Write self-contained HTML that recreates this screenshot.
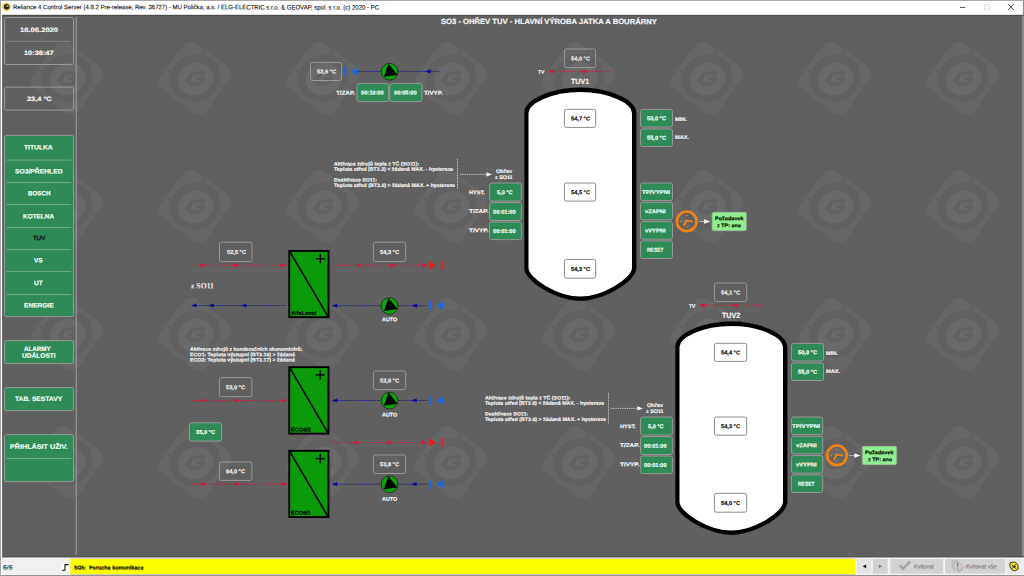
<!DOCTYPE html>
<html lang="cs"><head><meta charset="utf-8"><title>Reliance 4 Control Server</title>
<style>
html,body{margin:0;padding:0;}
body{width:1024px;height:576px;overflow:hidden;background:#606060;position:relative;font-family:"Liberation Sans",sans-serif;}
#g{position:absolute;left:0;top:0;width:1024px;height:576px;display:block;}
#t{position:absolute;left:0;top:0;width:1024px;height:576px;overflow:hidden;}
#t span{position:absolute;white-space:nowrap;transform-origin:0 50%;font-weight:bold;line-height:10px;height:10px;-webkit-text-stroke:0.18px currentColor;}
#t span.r{font-weight:normal;-webkit-text-stroke:0.08px currentColor;}
#t span.s{font-family:"Liberation Serif",serif;-webkit-text-stroke:0;}
</style></head><body>
<svg id="g" width="1024" height="576" viewBox="0 0 1024 576">
<defs><g id="wm">
<rect x="-29" y="-29" width="58" height="58" rx="11" transform="rotate(37)" fill="#676767"/>
<ellipse cx="0" cy="0" rx="26" ry="23.5" transform="rotate(-28)" fill="#616161"/>
<path d="M5.5 -20 L11.8 -33.5 M21 5 L34.5 12.8 M-6 21 L-11.8 34 M-21 -4.5 L-34 -11" fill="none" stroke="#616161" stroke-width="1.7"/>
<ellipse cx="0.3" cy="1.2" rx="18.2" ry="16" transform="rotate(-20)" fill="#6a6a6a"/>
<text transform="translate(0.6 0.3) rotate(-10) translate(0 6.8) scale(1.42 1)" stroke="#626262" stroke-width="0.6" x="0" y="0" text-anchor="middle" font-family="Liberation Sans, sans-serif" font-weight="bold" font-style="italic" font-size="18.8" fill="#626262">G</text>
</g></defs>
<use href="#wm" x="67" y="78"/>
<use href="#wm" x="195" y="78"/>
<use href="#wm" x="323" y="78"/>
<use href="#wm" x="451" y="78"/>
<use href="#wm" x="579" y="78"/>
<use href="#wm" x="707" y="78"/>
<use href="#wm" x="835" y="78"/>
<use href="#wm" x="963" y="78"/>
<use href="#wm" x="67" y="206"/>
<use href="#wm" x="195" y="206"/>
<use href="#wm" x="323" y="206"/>
<use href="#wm" x="451" y="206"/>
<use href="#wm" x="579" y="206"/>
<use href="#wm" x="707" y="206"/>
<use href="#wm" x="835" y="206"/>
<use href="#wm" x="963" y="206"/>
<use href="#wm" x="67" y="334"/>
<use href="#wm" x="195" y="334"/>
<use href="#wm" x="323" y="334"/>
<use href="#wm" x="451" y="334"/>
<use href="#wm" x="579" y="334"/>
<use href="#wm" x="707" y="334"/>
<use href="#wm" x="835" y="334"/>
<use href="#wm" x="963" y="334"/>
<use href="#wm" x="67" y="462"/>
<use href="#wm" x="195" y="462"/>
<use href="#wm" x="323" y="462"/>
<use href="#wm" x="451" y="462"/>
<use href="#wm" x="579" y="462"/>
<use href="#wm" x="707" y="462"/>
<use href="#wm" x="835" y="462"/>
<use href="#wm" x="963" y="462"/>
<rect x="0" y="0" width="1024" height="14.9" fill="#ffffff"/>
<rect x="0" y="0" width="1024" height="0.9" fill="#a0a0a0"/>
<rect x="0" y="14.9" width="1024" height="0.9" fill="#464646"/>
<rect x="1" y="0.9" width="1.1" height="575" fill="#ffffff"/>
<rect x="0" y="0" width="1" height="576" fill="#a6a6a6"/>
<rect x="1021.8" y="15.8" width="2.2" height="541" fill="#8a8a8a"/>
<rect x="1022.9" y="0" width="1.1" height="15" fill="#909090"/>
<ellipse cx="6.5" cy="6.9" rx="4.2" ry="3.9" transform="rotate(35 6.5 6.9)" fill="#f0cc12"/>
<circle cx="6.7" cy="6.7" r="2.7" fill="#141e4a"/>
<path d="M5.6 6.4 Q6.8 4.6 8.8 5.4 L8.6 6.6 L7 6.8 Z" fill="#f4d418"/>
<line x1="960.00" y1="7.40" x2="965.20" y2="7.40" stroke="#222" stroke-width="0.80" />
<rect x="984.30" y="4.30" width="4.90" height="5.40" rx="0.00" fill="none" stroke="#d2d2d2" stroke-width="0.70" />
<line x1="1008.20" y1="4.10" x2="1013.80" y2="9.90" stroke="#222" stroke-width="0.75" />
<line x1="1013.80" y1="4.10" x2="1008.20" y2="9.90" stroke="#222" stroke-width="0.75" />
<rect x="2.1" y="556.4" width="1022" height="1.1" fill="#4c4c4c"/>
<rect x="2.1" y="557.5" width="1022" height="17.6" fill="#fbfbfb"/>
<rect x="2.1" y="558.4" width="1022" height="16.3" fill="#f0f0f0"/>
<rect x="0" y="575.1" width="1024" height="0.9" fill="#989898"/>
<rect x="70.4" y="558.6" width="784.8" height="15.9" fill="#ffff00"/>
<rect x="70.4" y="558.3" width="784.8" height="0.6" fill="#c8c8e8"/>
<rect x="70.4" y="574.1" width="784.8" height="0.6" fill="#b0b0d8"/>
<rect x="61" y="563.2" width="8.4" height="8" fill="#fff"/>
<path d="M62 570.2 H65 V564.6 H68.6" fill="none" stroke="#111" stroke-width="1.1"/>
<rect x="857.1" y="558.9" width="14.1" height="14.8" fill="#e4e4e4"/>
<rect x="872.9" y="558.9" width="14.8" height="14.8" fill="#d2d2d2"/>
<rect x="890.4" y="558.9" width="52.7" height="14.8" fill="#d2d2d2"/>
<rect x="945.2" y="558.9" width="59.8" height="14.8" fill="#d2d2d2"/>
<rect x="1006.3" y="558.9" width="14.5" height="14.8" fill="#e8e8e8"/>
<path d="M862.60 566.30L866.20 564.40L866.20 568.20Z" fill="#111"/>
<path d="M882.40 566.30L878.80 564.40L878.80 568.20Z" fill="#8a8a8a"/>
<path d="M899.8 565.4 L903 568.8 L910.2 561.4" fill="none" stroke="#a6a6a6" stroke-width="2.4" stroke-linejoin="miter"/>
<path d="M952 560.4 H957.6 L959.6 562.4 V568 H952 Z" fill="#c4c4c4" stroke="#aaa" stroke-width="0.5"/>
<path d="M954 562.6 H960 L962 564.6 V570.4 H954 Z" fill="#cdcdcd" stroke="#a6a6a6" stroke-width="0.5"/>
<path d="M957.2 569 L959.6 571.6 L964.2 566.6" fill="none" stroke="#b0b0b0" stroke-width="1.2"/>
<path d="M957.6 563 V566.6 M957.6 567.6 V568.6" fill="none" stroke="#858585" stroke-width="1.5"/>
<path d="M1010.2 562.4 L1015 562 L1017.8 564.4 L1018.2 569.2 L1014.6 571 L1011.6 569.6 L1009.8 566 Z" fill="#f2e22a" stroke="#1c1c1c" stroke-width="0.8"/>
<path d="M1011.6 564.6 L1016.4 569 M1016 564 L1012.2 568.6 M1012.4 566.6 H1016" stroke="#1c1c1c" stroke-width="0.8" fill="none"/>
<line x1="76.20" y1="17.00" x2="76.20" y2="555.00" stroke="#a0a0a0" stroke-width="1.00" />
<rect x="4.50" y="17.50" width="69.00" height="47.00" rx="1.80" fill="none" stroke="#979797" stroke-width="1.00" />
<line x1="6.20" y1="41.30" x2="71.20" y2="41.30" stroke="#8a8a8a" stroke-width="0.80" />
<rect x="4.50" y="87.10" width="69.00" height="23.00" rx="1.80" fill="none" stroke="#979797" stroke-width="1.00" />
<rect x="4.50" y="135.40" width="69.00" height="181.20" rx="1.80" fill="#2e8b57" stroke="#979797" stroke-width="1.00" />
<line x1="6.40" y1="160.10" x2="71.20" y2="160.10" stroke="#8fb8a0" stroke-width="0.70" />
<line x1="6.40" y1="182.60" x2="71.20" y2="182.60" stroke="#8fb8a0" stroke-width="0.70" />
<line x1="6.40" y1="204.60" x2="71.20" y2="204.60" stroke="#8fb8a0" stroke-width="0.70" />
<line x1="6.40" y1="227.60" x2="71.20" y2="227.60" stroke="#8fb8a0" stroke-width="0.70" />
<line x1="6.40" y1="249.60" x2="71.20" y2="249.60" stroke="#8fb8a0" stroke-width="0.70" />
<line x1="6.40" y1="271.60" x2="71.20" y2="271.60" stroke="#8fb8a0" stroke-width="0.70" />
<line x1="6.40" y1="294.60" x2="71.20" y2="294.60" stroke="#8fb8a0" stroke-width="0.70" />
<rect x="4.50" y="340.60" width="69.00" height="23.00" rx="1.80" fill="#2e8b57" stroke="#979797" stroke-width="1.00" />
<rect x="4.50" y="387.60" width="69.00" height="23.00" rx="1.80" fill="#2e8b57" stroke="#979797" stroke-width="1.00" />
<rect x="4.50" y="434.60" width="69.00" height="47.00" rx="1.80" fill="#2e8b57" stroke="#979797" stroke-width="1.00" />
<line x1="6.40" y1="458.50" x2="71.20" y2="458.50" stroke="#8fb8a0" stroke-width="0.70" />
<rect x="310.50" y="62.40" width="31.20" height="18.10" rx="2.00" fill="none" stroke="#979797" stroke-width="1.00" />
<line x1="344.50" y1="66.90" x2="344.50" y2="75.90" stroke="#1469f0" stroke-width="1.40" />
<path d="M351.40 71.40L357.20 67.40L357.20 75.40Z" fill="#1469f0"/>
<line x1="357.20" y1="71.40" x2="440.60" y2="71.40" stroke="#0c0c96" stroke-width="0.80" stroke-dasharray="1.1 0.75" />
<path d="M425.00 71.40L430.60 69.30L430.60 73.50Z" fill="#0c0c96"/>
<circle cx="389.55" cy="71.70" r="8.40" fill="#0ca20c" stroke="#1a1a1a" stroke-width="0.7"/>
<path d="M388.55 63.70 L383.95 76.80 L397.55 74.90 Z" fill="#000"/>
<rect x="357.00" y="83.40" width="31.60" height="18.20" rx="2.00" fill="#2e8b57" stroke="#979797" stroke-width="1.00" />
<rect x="389.80" y="83.40" width="32.10" height="18.20" rx="2.00" fill="#2e8b57" stroke="#979797" stroke-width="1.00" />
<rect x="219.50" y="242.20" width="32.50" height="19.40" rx="2.00" fill="none" stroke="#979797" stroke-width="1.00" />
<line x1="191.00" y1="265.30" x2="286.60" y2="265.30" stroke="#dc143c" stroke-width="0.80" stroke-dasharray="1.1 0.75" />
<path d="M206.40 265.30L200.80 263.20L200.80 267.40Z" fill="#dc143c"/>
<path d="M239.60 265.30L234.00 263.20L234.00 267.40Z" fill="#dc143c"/>
<path d="M286.40 265.30L280.80 263.20L280.80 267.40Z" fill="#dc143c"/>
<rect x="289.25" y="250.95" width="39.30" height="66.20" fill="#0a9a0a" stroke="#000" stroke-width="1.9"/>
<line x1="289.70" y1="251.40" x2="328.10" y2="316.70" stroke="#000" stroke-width="1.60" />
<line x1="315.70" y1="258.70" x2="324.90" y2="258.70" stroke="#000" stroke-width="1.40" />
<line x1="320.30" y1="254.10" x2="320.30" y2="263.30" stroke="#000" stroke-width="1.40" />
<rect x="373.40" y="242.20" width="32.30" height="19.40" rx="2.00" fill="none" stroke="#979797" stroke-width="1.00" />
<line x1="331.00" y1="265.30" x2="427.60" y2="265.30" stroke="#dc143c" stroke-width="0.80" stroke-dasharray="1.1 0.75" />
<path d="M362.60 265.30L357.00 263.20L357.00 267.40Z" fill="#dc143c"/>
<path d="M395.80 265.30L390.20 263.20L390.20 267.40Z" fill="#dc143c"/>
<path d="M428.00 265.30L422.40 263.20L422.40 267.40Z" fill="#dc143c"/>
<path d="M435.60 265.30L429.60 261.30L429.60 269.30Z" fill="#ff1010"/>
<line x1="442.20" y1="261.00" x2="442.20" y2="269.60" stroke="#ff1010" stroke-width="1.30" />
<line x1="192.00" y1="305.50" x2="285.60" y2="305.50" stroke="#0c0c96" stroke-width="0.80" stroke-dasharray="1.1 0.75" />
<path d="M191.00 305.50L196.60 303.40L196.60 307.60Z" fill="#0c0c96"/>
<path d="M208.20 305.50L213.80 303.40L213.80 307.60Z" fill="#0c0c96"/>
<path d="M241.00 305.50L246.60 303.40L246.60 307.60Z" fill="#0c0c96"/>
<line x1="332.50" y1="305.70" x2="427.40" y2="305.70" stroke="#0c0c96" stroke-width="0.80" stroke-dasharray="1.1 0.75" />
<path d="M331.80 305.70L337.40 303.60L337.40 307.80Z" fill="#0c0c96"/>
<path d="M411.40 305.70L417.00 303.60L417.00 307.80Z" fill="#0c0c96"/>
<circle cx="389.50" cy="305.90" r="8.40" fill="#0ca20c" stroke="#1a1a1a" stroke-width="0.7"/>
<path d="M388.50 297.90 L383.90 311.00 L397.50 309.10 Z" fill="#000"/>
<line x1="430.30" y1="301.00" x2="430.30" y2="310.20" stroke="#1469f0" stroke-width="1.40" />
<path d="M436.90 305.70L442.90 301.60L442.90 309.80Z" fill="#1469f0"/>
<rect x="219.40" y="377.60" width="32.50" height="19.10" rx="2.00" fill="none" stroke="#979797" stroke-width="1.00" />
<line x1="190.40" y1="400.50" x2="287.00" y2="400.50" stroke="#dc143c" stroke-width="0.80" stroke-dasharray="1.1 0.75" />
<path d="M207.00 400.50L201.40 398.40L201.40 402.60Z" fill="#dc143c"/>
<path d="M240.40 400.50L234.80 398.40L234.80 402.60Z" fill="#dc143c"/>
<path d="M287.00 400.50L281.40 398.40L281.40 402.60Z" fill="#dc143c"/>
<rect x="289.25" y="367.15" width="39.20" height="66.50" fill="#0a9a0a" stroke="#000" stroke-width="1.9"/>
<line x1="289.70" y1="367.60" x2="328.00" y2="433.20" stroke="#000" stroke-width="1.60" />
<line x1="315.60" y1="374.90" x2="324.80" y2="374.90" stroke="#000" stroke-width="1.40" />
<line x1="320.20" y1="370.30" x2="320.20" y2="379.50" stroke="#000" stroke-width="1.40" />
<rect x="373.40" y="371.00" width="32.30" height="18.70" rx="2.00" fill="none" stroke="#979797" stroke-width="1.00" />
<line x1="332.50" y1="400.50" x2="428.20" y2="400.50" stroke="#0c0c96" stroke-width="0.80" stroke-dasharray="1.1 0.75" />
<path d="M331.80 400.50L337.40 398.40L337.40 402.60Z" fill="#0c0c96"/>
<path d="M411.00 400.50L416.60 398.40L416.60 402.60Z" fill="#0c0c96"/>
<circle cx="389.55" cy="400.55" r="8.40" fill="#0ca20c" stroke="#1a1a1a" stroke-width="0.7"/>
<path d="M388.55 392.55 L383.95 405.65 L397.55 403.75 Z" fill="#000"/>
<line x1="430.20" y1="396.00" x2="430.20" y2="405.20" stroke="#1469f0" stroke-width="1.40" />
<path d="M436.90 400.50L442.90 396.40L442.90 404.60Z" fill="#1469f0"/>
<rect x="189.50" y="422.80" width="32.20" height="18.30" rx="2.00" fill="#2e8b57" stroke="#979797" stroke-width="1.00" />
<line x1="331.80" y1="442.50" x2="426.60" y2="442.50" stroke="#dc143c" stroke-width="0.80" stroke-dasharray="1.1 0.75" />
<path d="M360.20 442.50L354.60 440.40L354.60 444.60Z" fill="#dc143c"/>
<path d="M393.20 442.50L387.60 440.40L387.60 444.60Z" fill="#dc143c"/>
<path d="M427.40 442.50L421.80 440.40L421.80 444.60Z" fill="#dc143c"/>
<path d="M435.90 442.50L429.90 438.50L429.90 446.50Z" fill="#ff1010"/>
<line x1="442.20" y1="438.20" x2="442.20" y2="446.90" stroke="#ff1010" stroke-width="1.30" />
<rect x="219.40" y="462.00" width="32.50" height="18.40" rx="2.00" fill="none" stroke="#979797" stroke-width="1.00" />
<line x1="190.40" y1="484.20" x2="287.00" y2="484.20" stroke="#dc143c" stroke-width="0.80" stroke-dasharray="1.1 0.75" />
<path d="M207.00 484.20L201.40 482.10L201.40 486.30Z" fill="#dc143c"/>
<path d="M240.40 484.20L234.80 482.10L234.80 486.30Z" fill="#dc143c"/>
<path d="M287.00 484.20L281.40 482.10L281.40 486.30Z" fill="#dc143c"/>
<rect x="289.25" y="450.85" width="39.20" height="66.20" fill="#0a9a0a" stroke="#000" stroke-width="1.9"/>
<line x1="289.70" y1="451.30" x2="328.00" y2="516.60" stroke="#000" stroke-width="1.60" />
<line x1="315.60" y1="458.60" x2="324.80" y2="458.60" stroke="#000" stroke-width="1.40" />
<line x1="320.20" y1="454.00" x2="320.20" y2="463.20" stroke="#000" stroke-width="1.40" />
<rect x="373.40" y="455.00" width="32.30" height="18.50" rx="2.00" fill="none" stroke="#979797" stroke-width="1.00" />
<line x1="332.50" y1="484.20" x2="428.20" y2="484.20" stroke="#0c0c96" stroke-width="0.80" stroke-dasharray="1.1 0.75" />
<path d="M331.80 484.20L337.40 482.10L337.40 486.30Z" fill="#0c0c96"/>
<path d="M411.00 484.20L416.60 482.10L416.60 486.30Z" fill="#0c0c96"/>
<circle cx="389.50" cy="484.20" r="8.40" fill="#0ca20c" stroke="#1a1a1a" stroke-width="0.7"/>
<path d="M388.50 476.20 L383.90 489.30 L397.50 487.40 Z" fill="#000"/>
<line x1="430.20" y1="479.70" x2="430.20" y2="488.90" stroke="#1469f0" stroke-width="1.40" />
<path d="M436.90 484.20L442.90 480.10L442.90 488.30Z" fill="#1469f0"/>
<line x1="457.50" y1="158.90" x2="457.50" y2="189.80" stroke="#f0f0f0" stroke-width="0.80" stroke-dasharray="0.9 0.9" />
<line x1="460.00" y1="174.40" x2="487.00" y2="174.40" stroke="#f0f0f0" stroke-width="0.80" stroke-dasharray="0.9 0.9" />
<path d="M492.00 174.40L486.40 172.20L486.40 176.60Z" fill="#f8f8f8"/>
<rect x="489.60" y="183.00" width="31.80" height="18.10" rx="2.00" fill="#2e8b57" stroke="#979797" stroke-width="1.00" />
<rect x="489.60" y="202.60" width="31.80" height="17.90" rx="2.00" fill="#2e8b57" stroke="#979797" stroke-width="1.00" />
<rect x="489.60" y="222.00" width="31.80" height="17.60" rx="2.00" fill="#2e8b57" stroke="#979797" stroke-width="1.00" />
<rect x="564.40" y="49.00" width="31.30" height="18.60" rx="2.00" fill="none" stroke="#979797" stroke-width="1.00" />
<line x1="549.50" y1="71.40" x2="611.40" y2="71.40" stroke="#dc143c" stroke-width="0.80" stroke-dasharray="1.1 0.75" />
<path d="M548.20 71.40L553.80 69.30L553.80 73.50Z" fill="#dc143c"/>
<path d="M580.80 71.40L586.40 69.30L586.40 73.50Z" fill="#dc143c"/>
<clipPath id="tk0"><path d="M524.20 112.90 C524.20 99.50 551.05 87.60 580.25 87.60 C609.45 87.60 636.30 99.50 636.30 112.90 L636.30 267.80 C636.30 282.50 602.25 300.90 580.25 300.90 C558.25 300.90 524.20 282.50 524.20 267.80 Z"/></clipPath>
<path d="M524.20 112.90 C524.20 99.50 551.05 87.60 580.25 87.60 C609.45 87.60 636.30 99.50 636.30 112.90 L636.30 267.80 C636.30 282.50 602.25 300.90 580.25 300.90 C558.25 300.90 524.20 282.50 524.20 267.80 Z" fill="#000"/>
<path d="M524.20 112.90 C524.20 99.50 551.05 87.60 580.25 87.60 C609.45 87.60 636.30 99.50 636.30 112.90 L636.30 267.80 C636.30 282.50 602.25 300.90 580.25 300.90 C558.25 300.90 524.20 282.50 524.20 267.80 Z" fill="#fff" stroke="#000" stroke-width="8.6" clip-path="url(#tk0)"/>
<rect x="564.40" y="109.30" width="31.30" height="18.10" rx="2.00" fill="#ffffff" stroke="#8a8a8a" stroke-width="1.00" />
<rect x="564.40" y="183.00" width="31.30" height="18.10" rx="2.00" fill="#ffffff" stroke="#8a8a8a" stroke-width="1.00" />
<rect x="564.40" y="259.40" width="31.30" height="18.80" rx="2.00" fill="#ffffff" stroke="#8a8a8a" stroke-width="1.00" />
<rect x="640.50" y="109.40" width="32.00" height="17.60" rx="2.00" fill="#2e8b57" stroke="#979797" stroke-width="1.00" />
<rect x="640.50" y="128.90" width="32.00" height="17.60" rx="2.00" fill="#2e8b57" stroke="#979797" stroke-width="1.00" />
<rect x="640.50" y="183.00" width="32.00" height="17.60" rx="2.00" fill="#2e8b57" stroke="#979797" stroke-width="1.00" />
<rect x="640.50" y="202.30" width="32.00" height="17.60" rx="2.00" fill="#2e8b57" stroke="#979797" stroke-width="1.00" />
<rect x="640.50" y="221.60" width="32.00" height="17.60" rx="2.00" fill="#2e8b57" stroke="#979797" stroke-width="1.00" />
<rect x="640.50" y="240.90" width="32.00" height="17.60" rx="2.00" fill="#2e8b57" stroke="#979797" stroke-width="1.00" />
<circle cx="686.70" cy="221.30" r="9.8" fill="none" stroke="#f5820f" stroke-width="2.6"/>
<path d="M692.70 221.60 L686.30 220.50 L683.70 225.90" fill="none" stroke="#f5820f" stroke-width="1.8" stroke-linejoin="miter"/>
<circle cx="686.70" cy="215.50" r="0.75" fill="#f5820f"/>
<circle cx="686.70" cy="227.20" r="0.75" fill="#f5820f"/>
<circle cx="680.80" cy="221.40" r="0.75" fill="#f5820f"/>
<line x1="699.40" y1="221.50" x2="704.40" y2="221.50" stroke="#f0f0f0" stroke-width="0.90" stroke-dasharray="1 0.9" />
<path d="M710.30 221.50L704.10 219.20L704.10 223.80Z" fill="#f8f8f8"/>
<rect x="711.90" y="212.00" width="34.80" height="18.90" rx="1.80" fill="#90ee90" stroke="#8a808a" stroke-width="0.70" />
<line x1="608.50" y1="392.90" x2="608.50" y2="423.80" stroke="#f0f0f0" stroke-width="0.80" stroke-dasharray="0.9 0.9" />
<line x1="611.00" y1="408.40" x2="638.00" y2="408.40" stroke="#f0f0f0" stroke-width="0.80" stroke-dasharray="0.9 0.9" />
<path d="M643.00 408.40L637.40 406.20L637.40 410.60Z" fill="#f8f8f8"/>
<rect x="640.60" y="417.00" width="31.80" height="18.10" rx="2.00" fill="#2e8b57" stroke="#979797" stroke-width="1.00" />
<rect x="640.60" y="436.60" width="31.80" height="17.90" rx="2.00" fill="#2e8b57" stroke="#979797" stroke-width="1.00" />
<rect x="640.60" y="456.00" width="31.80" height="17.60" rx="2.00" fill="#2e8b57" stroke="#979797" stroke-width="1.00" />
<rect x="714.40" y="283.00" width="32.30" height="18.60" rx="2.00" fill="none" stroke="#979797" stroke-width="1.00" />
<line x1="700.50" y1="305.40" x2="762.40" y2="305.40" stroke="#dc143c" stroke-width="0.80" stroke-dasharray="1.1 0.75" />
<path d="M699.20 305.40L704.80 303.30L704.80 307.50Z" fill="#dc143c"/>
<path d="M731.80 305.40L737.40 303.30L737.40 307.50Z" fill="#dc143c"/>
<clipPath id="tk151"><path d="M675.20 346.90 C675.20 333.50 702.05 321.60 731.25 321.60 C760.45 321.60 787.30 333.50 787.30 346.90 L787.30 501.80 C787.30 516.50 753.25 534.90 731.25 534.90 C709.25 534.90 675.20 516.50 675.20 501.80 Z"/></clipPath>
<path d="M675.20 346.90 C675.20 333.50 702.05 321.60 731.25 321.60 C760.45 321.60 787.30 333.50 787.30 346.90 L787.30 501.80 C787.30 516.50 753.25 534.90 731.25 534.90 C709.25 534.90 675.20 516.50 675.20 501.80 Z" fill="#000"/>
<path d="M675.20 346.90 C675.20 333.50 702.05 321.60 731.25 321.60 C760.45 321.60 787.30 333.50 787.30 346.90 L787.30 501.80 C787.30 516.50 753.25 534.90 731.25 534.90 C709.25 534.90 675.20 516.50 675.20 501.80 Z" fill="#fff" stroke="#000" stroke-width="8.6" clip-path="url(#tk151)"/>
<rect x="714.40" y="343.30" width="32.30" height="18.10" rx="2.00" fill="#ffffff" stroke="#8a8a8a" stroke-width="1.00" />
<rect x="714.40" y="417.00" width="32.30" height="18.10" rx="2.00" fill="#ffffff" stroke="#8a8a8a" stroke-width="1.00" />
<rect x="714.40" y="493.40" width="32.30" height="18.80" rx="2.00" fill="#ffffff" stroke="#8a8a8a" stroke-width="1.00" />
<rect x="791.50" y="343.40" width="32.00" height="17.60" rx="2.00" fill="#2e8b57" stroke="#979797" stroke-width="1.00" />
<rect x="791.50" y="362.90" width="32.00" height="17.60" rx="2.00" fill="#2e8b57" stroke="#979797" stroke-width="1.00" />
<rect x="791.50" y="417.00" width="31.20" height="17.60" rx="2.00" fill="#2e8b57" stroke="#979797" stroke-width="1.00" />
<rect x="791.50" y="436.30" width="31.20" height="17.60" rx="2.00" fill="#2e8b57" stroke="#979797" stroke-width="1.00" />
<rect x="791.50" y="455.60" width="31.20" height="17.60" rx="2.00" fill="#2e8b57" stroke="#979797" stroke-width="1.00" />
<rect x="791.50" y="474.90" width="31.20" height="17.60" rx="2.00" fill="#2e8b57" stroke="#979797" stroke-width="1.00" />
<circle cx="836.90" cy="455.30" r="9.8" fill="none" stroke="#f5820f" stroke-width="2.6"/>
<path d="M842.90 455.60 L836.50 454.50 L833.90 459.90" fill="none" stroke="#f5820f" stroke-width="1.8" stroke-linejoin="miter"/>
<circle cx="836.90" cy="449.50" r="0.75" fill="#f5820f"/>
<circle cx="836.90" cy="461.20" r="0.75" fill="#f5820f"/>
<circle cx="831.00" cy="455.40" r="0.75" fill="#f5820f"/>
<line x1="849.60" y1="455.50" x2="854.60" y2="455.50" stroke="#f0f0f0" stroke-width="0.90" stroke-dasharray="1 0.9" />
<path d="M860.50 455.50L854.30 453.20L854.30 457.80Z" fill="#f8f8f8"/>
<rect x="862.10" y="446.00" width="34.80" height="18.90" rx="1.80" fill="#90ee90" stroke="#8a808a" stroke-width="0.70" />
</svg>
<div id="t">
<span id="t0" class="r" style="left:13.30px;top:2px;font-size:6.50px;color:#000;transform:translateY(0.20px) scaleX(0.9244) rotate(0.04deg);">Reliance 4 Control Server (4.8.2 Pre-release, Rev. 36727) - MU Polička, a.s. / ELG-ELECTRIC s.r.o. &amp; GEOVAP, spol. s r.o. (c) 2020 - PC</span>
<span id="t1" class="r" style="left:3.00px;top:562px;font-size:6.30px;color:#111;transform:translateY(0.40px) scaleX(1.0715) rotate(0.04deg);">6/6</span>
<span id="t2" style="left:73.60px;top:562px;font-size:5.50px;color:#000;transform:translateY(0.40px) scaleX(0.9494) rotate(0.04deg);">SO5:</span>
<span id="t3" style="left:89.00px;top:562px;font-size:5.50px;color:#000;transform:translateY(0.40px) scaleX(0.9831) rotate(0.04deg);">Porucha komunikace</span>
<span id="t4" class="r" style="left:913.80px;top:561px;font-size:6.00px;color:#707070;transform:translateY(0.60px) scaleX(0.9274) rotate(0.04deg);">Kvitovat</span>
<span id="t5" class="r" style="left:966.40px;top:561px;font-size:6.00px;color:#707070;transform:translateY(0.60px) scaleX(0.9454) rotate(0.04deg);">Kvitovat vše</span>
<span id="t6" style="left:20.00px;top:25px;font-size:6.30px;color:#f4f4f4;transform:translateY(0.00px) scaleX(1.2087) rotate(0.04deg);">16.06.2020</span>
<span id="t7" style="left:24.40px;top:48px;font-size:6.30px;color:#f4f4f4;transform:translateY(0.00px) scaleX(1.1734) rotate(0.04deg);">10:38:47</span>
<span id="t8" style="left:26.60px;top:93px;font-size:6.30px;color:#f4f4f4;transform:translateY(0.90px) scaleX(1.1714) rotate(0.04deg);">23,4 °C</span>
<span id="t9" style="left:24.40px;top:142px;font-size:6.50px;color:#f0fff4;transform:translateY(0.50px) scaleX(1.0317) rotate(0.04deg);">TITULKA</span>
<span id="t10" style="left:14.60px;top:166px;font-size:6.50px;color:#f0fff4;transform:translateY(0.50px) scaleX(1.0353) rotate(0.04deg);">SO3/PŘEHLED</span>
<span id="t11" style="left:27.80px;top:188px;font-size:6.50px;color:#f0fff4;transform:translateY(0.40px) scaleX(0.9578) rotate(0.04deg);">BOSCH</span>
<span id="t12" style="left:22.90px;top:211px;font-size:6.50px;color:#f0fff4;transform:translateY(0.40px) scaleX(0.9895) rotate(0.04deg);">KOTELNA</span>
<span id="t13" style="left:32.50px;top:233px;font-size:6.50px;color:#0c0c1c;transform:translateY(0.30px) scaleX(0.9610) rotate(0.04deg);">TUV</span>
<span id="t14" style="left:34.40px;top:255px;font-size:6.50px;color:#f0fff4;transform:translateY(0.60px) scaleX(1.0024) rotate(0.04deg);">VS</span>
<span id="t15" style="left:33.80px;top:278px;font-size:6.50px;color:#f0fff4;transform:translateY(0.20px) scaleX(1.0024) rotate(0.04deg);">UT</span>
<span id="t16" style="left:23.80px;top:300px;font-size:6.50px;color:#f0fff4;transform:translateY(0.40px) scaleX(1.0112) rotate(0.04deg);">ENERGIE</span>
<span id="t17" style="left:24.40px;top:344px;font-size:6.50px;color:#f0fff4;transform:translateY(0.00px) scaleX(0.9562) rotate(0.04deg);">ALARMY</span>
<span id="t18" style="left:21.90px;top:350px;font-size:6.50px;color:#f0fff4;transform:translateY(0.70px) scaleX(1.0138) rotate(0.04deg);">UDÁLOSTI</span>
<span id="t19" style="left:15.00px;top:394px;font-size:6.50px;color:#f0fff4;transform:translateY(0.00px) scaleX(1.0265) rotate(0.04deg);">TAB. SESTAVY</span>
<span id="t20" style="left:9.80px;top:441px;font-size:6.50px;color:#f0fff4;transform:translateY(0.70px) scaleX(1.1065) rotate(0.04deg);">PŘIHLÁSIT UŽIV.</span>
<span id="t21" style="left:440.50px;top:17px;font-size:7.60px;color:#f4f4f4;transform:translateY(0.00px) scaleX(1.0055) rotate(0.04deg);">SO3 - OHŘEV TUV - HLAVNÍ VÝROBA JATKA A BOURÁRNY</span>
<span id="t22" style="left:316.90px;top:66px;font-size:5.70px;color:#ececec;transform:translateY(0.55px) scaleX(0.9972) rotate(0.04deg);">52,6 °C</span>
<span id="t23" style="left:336.00px;top:87px;font-size:5.60px;color:#f4f4f4;transform:translateY(0.70px) scaleX(1.1172) rotate(0.04deg);">T/ZAP.</span>
<span id="t24" style="left:360.65px;top:87px;font-size:5.70px;color:#f2fff4;transform:translateY(0.60px) scaleX(0.9961) rotate(0.04deg);">00:10:00</span>
<span id="t25" style="left:393.70px;top:87px;font-size:5.70px;color:#f2fff4;transform:translateY(0.60px) scaleX(0.9961) rotate(0.04deg);">00:05:00</span>
<span id="t26" style="left:424.20px;top:87px;font-size:5.60px;color:#f4f4f4;transform:translateY(0.70px) scaleX(1.1054) rotate(0.04deg);">T/VYP.</span>
<span id="t27" style="left:226.55px;top:247px;font-size:5.70px;color:#ececec;transform:translateY(0.00px) scaleX(0.9972) rotate(0.04deg);">52,5 °C</span>
<span id="t28" style="left:291.20px;top:307px;font-size:5.70px;color:#000;transform:translateY(0.90px) scaleX(1.0038) rotate(0.04deg);">AlfaLaval</span>
<span id="t29" style="left:380.35px;top:247px;font-size:5.70px;color:#ececec;transform:translateY(0.00px) scaleX(0.9972) rotate(0.04deg);">54,3 °C</span>
<span id="t30" class="s" style="left:190.80px;top:281px;font-size:7.80px;color:#f0f0f0;transform:translateY(0.30px) scaleX(0.9916) rotate(0.04deg);">z SO11</span>
<span id="t31" style="left:381.90px;top:314px;font-size:5.30px;color:#f4f4f4;transform:translateY(0.30px) scaleX(1.0182) rotate(0.04deg);">AUTO</span>
<span id="t32" style="left:189.70px;top:343px;font-size:5.00px;color:#f2f2f2;transform:translateY(0.80px) scaleX(1.0301) rotate(0.04deg);">Aktivace zdrojů z kondezačních ekonomizérů:</span>
<span id="t33" style="left:189.70px;top:349px;font-size:5.00px;color:#f2f2f2;transform:translateY(0.20px) scaleX(1.0511) rotate(0.04deg);">ECO1: Teplota výstupní (BT3.16) &gt; žádaná</span>
<span id="t34" style="left:189.70px;top:354px;font-size:5.00px;color:#f2f2f2;transform:translateY(0.50px) scaleX(1.0511) rotate(0.04deg);">ECO2: Teplota výstupní (BT3.17) &gt; žádaná</span>
<span id="t35" style="left:226.45px;top:382px;font-size:5.70px;color:#ececec;transform:translateY(0.25px) scaleX(0.9972) rotate(0.04deg);">53,0 °C</span>
<span id="t36" style="left:291.20px;top:424px;font-size:5.70px;color:#000;transform:translateY(0.40px) scaleX(0.9881) rotate(0.04deg);">ECO6/2</span>
<span id="t37" style="left:380.35px;top:375px;font-size:5.70px;color:#ececec;transform:translateY(0.45px) scaleX(0.9972) rotate(0.04deg);">52,8 °C</span>
<span id="t38" style="left:381.90px;top:409px;font-size:5.30px;color:#f4f4f4;transform:translateY(0.60px) scaleX(1.0182) rotate(0.04deg);">AUTO</span>
<span id="t39" style="left:196.40px;top:427px;font-size:5.70px;color:#f2fff4;transform:translateY(0.05px) scaleX(0.9972) rotate(0.04deg);">35,0 °C</span>
<span id="t40" style="left:226.45px;top:466px;font-size:5.70px;color:#ececec;transform:translateY(0.30px) scaleX(0.9972) rotate(0.04deg);">64,0 °C</span>
<span id="t41" style="left:291.20px;top:507px;font-size:5.70px;color:#000;transform:translateY(0.80px) scaleX(0.9881) rotate(0.04deg);">ECO6/1</span>
<span id="t42" style="left:380.35px;top:459px;font-size:5.70px;color:#ececec;transform:translateY(0.35px) scaleX(0.9972) rotate(0.04deg);">53,8 °C</span>
<span id="t43" style="left:381.90px;top:493px;font-size:5.30px;color:#f4f4f4;transform:translateY(0.70px) scaleX(1.0182) rotate(0.04deg);">AUTO</span>
<span id="t44" style="left:334.00px;top:158px;font-size:5.00px;color:#f2f2f2;transform:translateY(0.40px) scaleX(1.0548) rotate(0.04deg);">Aktivace zdrojů tepla z TČ (SO11):</span>
<span id="t45" style="left:334.00px;top:163px;font-size:5.00px;color:#f2f2f2;transform:translateY(0.80px) scaleX(1.0509) rotate(0.04deg);">Teplota střed (BT3.2) &lt; žádaná MAX. - hystereze</span>
<span id="t46" style="left:334.00px;top:174px;font-size:5.00px;color:#f2f2f2;transform:translateY(0.50px) scaleX(1.0309) rotate(0.04deg);">Deaktivace SO11:</span>
<span id="t47" style="left:334.00px;top:179px;font-size:5.00px;color:#f2f2f2;transform:translateY(0.90px) scaleX(1.0551) rotate(0.04deg);">Teplota střed (BT3.2) &gt; žádaná MAX. + hystereze</span>
<span id="t48" style="left:496.20px;top:166px;font-size:5.20px;color:#f4f4f4;transform:translateY(0.10px) scaleX(1.0728) rotate(0.04deg);">Ohřev</span>
<span id="t49" style="left:495.10px;top:172px;font-size:5.20px;color:#f4f4f4;transform:translateY(0.00px) scaleX(1.0339) rotate(0.04deg);">z SO11</span>
<span id="t50" style="left:468.70px;top:187px;font-size:5.40px;color:#f4f4f4;transform:translateY(0.20px) scaleX(1.0269) rotate(0.04deg);">HYST.</span>
<span id="t51" style="left:468.70px;top:205px;font-size:5.40px;color:#f4f4f4;transform:translateY(0.90px) scaleX(1.1903) rotate(0.04deg);">T/ZAP.</span>
<span id="t52" style="left:468.70px;top:225px;font-size:5.40px;color:#f4f4f4;transform:translateY(0.20px) scaleX(1.1892) rotate(0.04deg);">T/VYP.</span>
<span id="t53" style="left:497.40px;top:187px;font-size:5.70px;color:#f2fff4;transform:translateY(0.15px) scaleX(0.9822) rotate(0.04deg);">5,0 °C</span>
<span id="t54" style="left:493.35px;top:206px;font-size:5.70px;color:#f2fff4;transform:translateY(0.65px) scaleX(0.9961) rotate(0.04deg);">00:01:00</span>
<span id="t55" style="left:493.35px;top:225px;font-size:5.70px;color:#f2fff4;transform:translateY(0.90px) scaleX(0.9961) rotate(0.04deg);">00:01:00</span>
<span id="t56" style="left:570.85px;top:53px;font-size:5.70px;color:#ececec;transform:translateY(0.40px) scaleX(0.9972) rotate(0.04deg);">54,0 °C</span>
<span id="t57" style="left:538.00px;top:66px;font-size:5.20px;color:#f4f4f4;transform:translateY(0.80px) scaleX(0.9628) rotate(0.04deg);">TV</span>
<span id="t58" style="left:571.20px;top:77px;font-size:7.60px;color:#f4f4f4;transform:translateY(0.00px) scaleX(0.9368) rotate(0.04deg);">TUV1</span>
<span id="t59" style="left:570.85px;top:113px;font-size:5.70px;color:#101010;transform:translateY(0.45px) scaleX(0.9972) rotate(0.04deg);">54,7 °C</span>
<span id="t60" style="left:570.85px;top:187px;font-size:5.70px;color:#101010;transform:translateY(0.15px) scaleX(0.9972) rotate(0.04deg);">54,5 °C</span>
<span id="t61" style="left:570.85px;top:263px;font-size:5.70px;color:#101010;transform:translateY(0.90px) scaleX(0.9972) rotate(0.04deg);">54,3 °C</span>
<span id="t62" style="left:647.30px;top:113px;font-size:5.70px;color:#f2fff4;transform:translateY(0.30px) scaleX(0.9972) rotate(0.04deg);">50,0 °C</span>
<span id="t63" style="left:647.30px;top:132px;font-size:5.70px;color:#f2fff4;transform:translateY(0.80px) scaleX(0.9972) rotate(0.04deg);">55,0 °C</span>
<span id="t64" style="left:674.90px;top:114px;font-size:5.20px;color:#f4f4f4;transform:translateY(0.10px) scaleX(1.1040) rotate(0.04deg);">MIN.</span>
<span id="t65" style="left:674.90px;top:132px;font-size:5.20px;color:#f4f4f4;transform:translateY(0.00px) scaleX(1.0866) rotate(0.04deg);">MAX.</span>
<span id="t66" style="left:641.60px;top:186px;font-size:5.60px;color:#f2fff4;transform:translateY(0.90px) scaleX(1.0977) rotate(0.04deg);">TP/VYPNI</span>
<span id="t67" style="left:645.30px;top:206px;font-size:5.60px;color:#f2fff4;transform:translateY(0.20px) scaleX(1.0345) rotate(0.04deg);">vZAPNI</span>
<span id="t68" style="left:645.30px;top:225px;font-size:5.60px;color:#f2fff4;transform:translateY(0.50px) scaleX(1.0345) rotate(0.04deg);">vVYPNI</span>
<span id="t69" style="left:647.30px;top:244px;font-size:5.60px;color:#f2fff4;transform:translateY(0.80px) scaleX(0.8895) rotate(0.04deg);">RESET</span>
<span id="t70" style="left:715.20px;top:213px;font-size:5.30px;color:#061006;transform:translateY(0.20px) scaleX(1.0475) rotate(0.04deg);">Požadavek</span>
<span id="t71" style="left:717.40px;top:220px;font-size:5.30px;color:#061006;transform:translateY(0.20px) scaleX(1.0232) rotate(0.04deg);">z TP: ano</span>
<span id="t72" style="left:485.00px;top:392px;font-size:5.00px;color:#f2f2f2;transform:translateY(0.40px) scaleX(1.0548) rotate(0.04deg);">Aktivace zdrojů tepla z TČ (SO11):</span>
<span id="t73" style="left:485.00px;top:397px;font-size:5.00px;color:#f2f2f2;transform:translateY(0.80px) scaleX(1.0509) rotate(0.04deg);">Teplota střed (BT3.6) &lt; žádaná MAX. - hystereze</span>
<span id="t74" style="left:485.00px;top:408px;font-size:5.00px;color:#f2f2f2;transform:translateY(0.50px) scaleX(1.0309) rotate(0.04deg);">Deaktivace SO11:</span>
<span id="t75" style="left:485.00px;top:413px;font-size:5.00px;color:#f2f2f2;transform:translateY(0.90px) scaleX(1.0551) rotate(0.04deg);">Teplota střed (BT3.6) &gt; žádaná MAX. + hystereze</span>
<span id="t76" style="left:647.20px;top:400px;font-size:5.20px;color:#f4f4f4;transform:translateY(0.10px) scaleX(1.0728) rotate(0.04deg);">Ohřev</span>
<span id="t77" style="left:646.10px;top:406px;font-size:5.20px;color:#f4f4f4;transform:translateY(0.00px) scaleX(1.0339) rotate(0.04deg);">z SO11</span>
<span id="t78" style="left:619.70px;top:421px;font-size:5.40px;color:#f4f4f4;transform:translateY(0.20px) scaleX(1.0269) rotate(0.04deg);">HYST.</span>
<span id="t79" style="left:619.70px;top:439px;font-size:5.40px;color:#f4f4f4;transform:translateY(0.90px) scaleX(1.1903) rotate(0.04deg);">T/ZAP.</span>
<span id="t80" style="left:619.70px;top:459px;font-size:5.40px;color:#f4f4f4;transform:translateY(0.20px) scaleX(1.1892) rotate(0.04deg);">T/VYP.</span>
<span id="t81" style="left:648.40px;top:421px;font-size:5.70px;color:#f2fff4;transform:translateY(0.15px) scaleX(0.9822) rotate(0.04deg);">5,0 °C</span>
<span id="t82" style="left:644.35px;top:440px;font-size:5.70px;color:#f2fff4;transform:translateY(0.65px) scaleX(0.9961) rotate(0.04deg);">00:01:00</span>
<span id="t83" style="left:644.35px;top:459px;font-size:5.70px;color:#f2fff4;transform:translateY(0.90px) scaleX(0.9961) rotate(0.04deg);">00:01:00</span>
<span id="t84" style="left:721.35px;top:287px;font-size:5.70px;color:#ececec;transform:translateY(0.40px) scaleX(0.9972) rotate(0.04deg);">54,1 °C</span>
<span id="t85" style="left:689.00px;top:300px;font-size:5.20px;color:#f4f4f4;transform:translateY(0.80px) scaleX(0.9628) rotate(0.04deg);">TV</span>
<span id="t86" style="left:722.20px;top:311px;font-size:7.60px;color:#f4f4f4;transform:translateY(0.00px) scaleX(0.9368) rotate(0.04deg);">TUV2</span>
<span id="t87" style="left:721.35px;top:347px;font-size:5.70px;color:#101010;transform:translateY(0.45px) scaleX(0.9972) rotate(0.04deg);">54,4 °C</span>
<span id="t88" style="left:721.35px;top:421px;font-size:5.70px;color:#101010;transform:translateY(0.15px) scaleX(0.9972) rotate(0.04deg);">54,3 °C</span>
<span id="t89" style="left:721.35px;top:497px;font-size:5.70px;color:#101010;transform:translateY(0.90px) scaleX(0.9972) rotate(0.04deg);">54,0 °C</span>
<span id="t90" style="left:798.30px;top:347px;font-size:5.70px;color:#f2fff4;transform:translateY(0.30px) scaleX(0.9972) rotate(0.04deg);">50,0 °C</span>
<span id="t91" style="left:798.30px;top:366px;font-size:5.70px;color:#f2fff4;transform:translateY(0.80px) scaleX(0.9972) rotate(0.04deg);">55,0 °C</span>
<span id="t92" style="left:825.90px;top:348px;font-size:5.20px;color:#f4f4f4;transform:translateY(0.10px) scaleX(1.1040) rotate(0.04deg);">MIN.</span>
<span id="t93" style="left:825.90px;top:366px;font-size:5.20px;color:#f4f4f4;transform:translateY(0.00px) scaleX(1.0866) rotate(0.04deg);">MAX.</span>
<span id="t94" style="left:792.20px;top:420px;font-size:5.60px;color:#f2fff4;transform:translateY(0.90px) scaleX(1.0977) rotate(0.04deg);">TP/VYPNI</span>
<span id="t95" style="left:795.90px;top:440px;font-size:5.60px;color:#f2fff4;transform:translateY(0.20px) scaleX(1.0345) rotate(0.04deg);">vZAPNI</span>
<span id="t96" style="left:795.90px;top:459px;font-size:5.60px;color:#f2fff4;transform:translateY(0.50px) scaleX(1.0345) rotate(0.04deg);">vVYPNI</span>
<span id="t97" style="left:797.90px;top:478px;font-size:5.60px;color:#f2fff4;transform:translateY(0.80px) scaleX(0.8895) rotate(0.04deg);">RESET</span>
<span id="t98" style="left:865.40px;top:447px;font-size:5.30px;color:#061006;transform:translateY(0.20px) scaleX(1.0475) rotate(0.04deg);">Požadavek</span>
<span id="t99" style="left:867.60px;top:454px;font-size:5.30px;color:#061006;transform:translateY(0.20px) scaleX(1.0232) rotate(0.04deg);">z TP: ano</span>
</div>
</body></html>
